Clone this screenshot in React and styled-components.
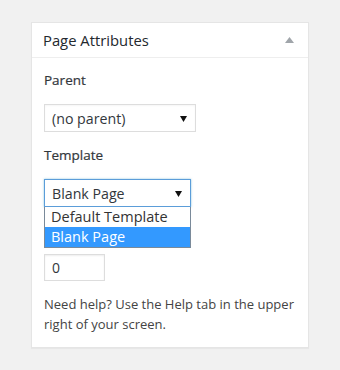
import React from "react";
import styled, { createGlobalStyle } from "styled-components";

const Global = createGlobalStyle`
  html, body { margin: 0; padding: 0; background: #f1f1f1; }
  body { font-family: "Open Sans", "Liberation Sans", sans-serif; color: #444; }
  * { box-sizing: border-box; }
`;

const Page = styled.div`
  padding: 22px 0 0 31px;
  width: 340px;
  height: 370px;
`;

const Panel = styled.section`
  width: 278px;
  background: #fff;
  border: 1px solid #e5e5e5;
  box-shadow: 0 1px 1px rgba(0, 0, 0, 0.04);
`;

const Header = styled.header`
  height: 35px;
  display: flex;
  align-items: center;
  justify-content: space-between;
  padding: 0 14px 1px 11px;
  border-bottom: 1px solid #eee;
`;

const Title = styled.h2`
  margin: 0;
  font-size: 14.8px;
  font-weight: 400;
  line-height: 18px;
  color: #23282d;
`;

const Toggle = styled.svg`
  width: 9px;
  height: 6px;
  display: block;
`;

const Body = styled.div`
  display: flex;
  flex-direction: column;
  align-items: flex-start;
  padding: 13px 4px 13px 12px;
`;

const Label = styled.div`
  font-size: 13.5px;
  font-weight: 400;
  line-height: 18px;
  color: #32373c;
  margin-bottom: 15px;
  -webkit-text-stroke: 0.2px #32373c;
`;

const Field = styled.div`
  position: relative;
  margin-bottom: 14px;
`;

const SelectBox = styled.div`
  width: ${(p) => p.$w}px;
  height: 28px;
  display: flex;
  align-items: center;
  justify-content: space-between;
  padding: 0 8px 0 7px;
  border: 1px solid ${(p) => (p.$focus ? "#5b9dd9" : "#ddd")};
  box-shadow: ${(p) => (p.$focus ? "0 0 2px rgba(30,140,190,.5)" : "inset 0 1px 2px rgba(0,0,0,.04)")};
  font-size: 14.2px;
  color: #32373c;
  background: #fff;
`;

const Arrow = styled.svg`
  width: 7px;
  height: 7px;
  display: block;
`;

const List = styled.ul`
  position: absolute;
  top: 28px;
  left: 0;
  width: 100%;
  margin: 0;
  padding: 0;
  list-style: none;
  background: #fff;
  border: 1px solid #7a8a9a;
  border-top: none;
  z-index: 2;
`;

const Option = styled.li`
  height: 20px;
  line-height: 20px;
  padding: 0 6px;
  font-size: 14.5px;
  color: ${(p) => (p.$active ? "#fff" : "#333")};
  background: ${(p) => (p.$active ? "#3399ff" : "#fff")};
`;

const NumberInput = styled.div`
  width: 61px;
  height: 27px;
  display: flex;
  align-items: center;
  padding: 0 7px;
  border: 1px solid #ddd;
  box-shadow: inset 0 1px 2px rgba(0, 0, 0, 0.07);
  font-size: 14px;
  color: #32373c;
  margin-bottom: 14px;
`;

const Help = styled.p`
  margin: 0;
  font-size: 13px;
  line-height: 19.5px;
  color: #444;
`;

const DownArrow = () => (
  <Arrow viewBox="0 0 7 7">
    <polygon points="0,1 7,1 3.5,7" fill="#111" />
  </Arrow>
);

export default function App() {
  return (
    <>
      <Global />
      <Page>
        <Panel>
          <Header>
            <Title>Page Attributes</Title>
            <Toggle viewBox="0 0 9 6">
              <polygon points="4.5,0 9,6 0,6" fill="#a0a5aa" />
            </Toggle>
          </Header>
          <Body>
            <Label>Parent</Label>
            <Field>
              <SelectBox $w={152}>
                <span>(no parent)</span>
                <DownArrow />
              </SelectBox>
            </Field>
            <Label>Template</Label>
            <Field>
              <SelectBox $w={147} $focus>
                <span>Blank Page</span>
                <DownArrow />
              </SelectBox>
              <List>
                <Option>Default Template</Option>
                <Option $active>Blank Page</Option>
              </List>
            </Field>
            <Label>Order</Label>
            <NumberInput>0</NumberInput>
            <Help>Need help? Use the Help tab in the upper right of your screen.</Help>
          </Body>
        </Panel>
      </Page>
    </>
  );
}
